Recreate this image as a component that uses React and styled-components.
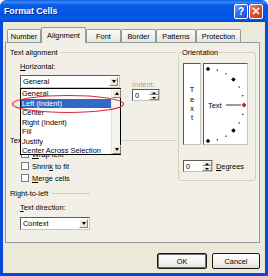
import styled, { createGlobalStyle } from 'styled-components';

const GlobalStyle = createGlobalStyle`
  body {
    margin: 0;
    background: #ffffff;
  }
  * {
    box-sizing: border-box;
  }
`;

const FONT = `"Liberation Sans", Arial, sans-serif`;

const Window = styled.div`
  width: 268px;
  height: 276px;
  display: flex;
  flex-direction: column;
  font-family: ${FONT};
  font-size: 7.4px;
  color: #000000;
`;

const TitleBar = styled.div`
  height: 22px;
  flex: none;
  display: flex;
  align-items: center;
  padding: 0 5px 0 4px;
  border-radius: 6px 6px 0 0;
  background: linear-gradient(
    #0a5ee8 0%,
    #3d8bf5 10%,
    #0a5ae6 22%,
    #0054e3 60%,
    #0259e8 88%,
    #0046c8 100%
  );
`;

const Title = styled.div`
  flex: 1;
  color: #ffffff;
  font-weight: bold;
  font-size: 8.8px;
  text-shadow: 1px 1px 0 #0a2a8a;
`;

const Caps = styled.div`
  display: flex;
  gap: 1px;
`;

const CapButton = styled.div`
  width: 14px;
  height: 15px;
  border: 1px solid #ffffff;
  border-radius: 2px;
  display: flex;
  align-items: center;
  justify-content: center;
  color: #ffffff;
  font-weight: bold;
  font-size: 10px;
  background: ${(p) =>
    p.$kind === 'close'
      ? 'linear-gradient(135deg, #f08a6a 0%, #e2502c 45%, #c4371c 100%)'
      : 'linear-gradient(135deg, #7aa6fb 0%, #2d6bf0 45%, #1c4fd6 100%)'};
`;

const Body = styled.div`
  flex: 1;
  display: flex;
  flex-direction: column;
  background: #ece9d8;
  border: 3px solid #0a4ad9;
  border-top: none;
  padding: 5px 5px 4px 2px;
`;

const TabRow = styled.div`
  height: 15px;
  display: flex;
  align-items: flex-end;
  padding-left: 2px;
  position: relative;
  z-index: 1;
`;

const Tab = styled.div`
  width: ${(p) => p.$w}px;
  height: ${(p) => (p.$active ? 16 : 13)}px;
  margin-bottom: ${(p) => (p.$active ? -1 : 0)}px;
  display: flex;
  align-items: center;
  justify-content: center;
  border: 1px solid #919b9c;
  border-bottom: none;
  border-radius: 2px 2px 0 0;
  background: ${(p) =>
    p.$active ? '#f2f0e6' : 'linear-gradient(#fbfbf8, #e8e6dc)'};
`;

const Panel = styled.div`
  height: 201px;
  position: relative;
  display: flex;
  align-items: flex-start;
  gap: 2px;
  padding: 4.5px 0 0 4px;
  border: 1px solid #919b9c;
  background: #f2f0e6;
`;

const LeftCol = styled.div`
  width: 166px;
  display: flex;
  flex-direction: column;
`;

const SectionHead = styled.div`
  width: ${(p) => p.$w || 166}px;
  height: 9px;
  margin-top: ${(p) => p.$mt || 0}px;
  display: flex;
  align-items: center;
  gap: 3px;
  line-height: 9px;
  white-space: nowrap;

  &::after {
    content: '';
    flex: 1;
    border-top: 1px solid #d0d0bf;
  }
`;

const Indented = styled.div`
  display: flex;
  flex-direction: column;
  align-items: flex-start;
  padding-left: 10px;
`;

const FieldLabel = styled.div`
  height: 9px;
  line-height: 9px;
  margin-top: ${(p) => p.$mt || 0}px;
  color: ${(p) => (p.$disabled ? '#aca899' : '#000000')};
  white-space: nowrap;
`;

const AlignRow = styled.div`
  display: flex;
  align-items: flex-start;
  margin-top: 4.5px;
`;

const Field = styled.div`
  width: ${(p) => p.$w}px;
  height: ${(p) => p.$h || 13}px;
  margin-top: ${(p) => p.$mt || 0}px;
  display: flex;
  align-items: center;
  background: #ffffff;
  border: 1px solid;
  border-color: #5a5a5a #c8c6bc #c8c6bc #5a5a5a;
  padding-left: 2px;
`;

const FieldText = styled.div`
  flex: 1;
  white-space: nowrap;
`;

const DropButton = styled.div`
  width: 9px;
  height: 9px;
  margin-right: 1px;
  display: flex;
  align-items: center;
  justify-content: center;
  background: #ece9d8;
  border: 1px solid;
  border-color: #ffffff #808080 #808080 #ffffff;

  &::after {
    content: '';
    border-left: 2.5px solid transparent;
    border-right: 2.5px solid transparent;
    border-${(p) => (p.$up ? 'bottom' : 'top')}: 3px solid #000000;
  }
`;

const SpinButtons = styled.div`
  width: 10px;
  height: 100%;
  display: flex;
  flex-direction: column;
`;

const SpinHalf = styled.div`
  flex: 1;
  display: flex;
  align-items: center;
  justify-content: center;
  background: #ece9d8;
  border: 1px solid;
  border-color: #ffffff #808080 #808080 #ffffff;

  &::after {
    content: '';
    border-left: 2px solid transparent;
    border-right: 2px solid transparent;
    border-${(p) => (p.$up ? 'bottom' : 'top')}: 2px solid #000000;
  }
`;

const IndentBlock = styled.div`
  display: flex;
  flex-direction: column;
  align-items: flex-start;
  margin-left: 12px;
  padding-top: 5px;
`;

const CheckList = styled.div`
  display: flex;
  flex-direction: column;
  margin-top: 3.5px;
  padding-left: 11px;
`;

const CheckRow = styled.div`
  height: 12px;
  display: flex;
  align-items: center;
  gap: 3px;
  white-space: nowrap;
`;

const CheckBox = styled.div`
  width: 8px;
  height: 8px;
  background: #ffffff;
  border: 1px solid #6f7f90;
`;

const OrientBox = styled.fieldset`
  width: 78px;
  height: 133.5px;
  margin: 0;
  padding: 0 4px;
  border: 1px solid #d0d0bf;
  border-radius: 3px;

  legend {
    height: 9px;
    line-height: 9px;
    padding: 0 1px;
    margin-left: -2px;
  }
`;

const DialRow = styled.div`
  display: flex;
  gap: 2px;
  margin-top: 6.5px;
  height: 82px;
`;

const WhiteBox = styled.div`
  width: ${(p) => p.$w}px;
  height: 100%;
  background: #ffffff;
  border: 1px solid;
  border-color: #5a5a5a #c8c6bc #c8c6bc #5a5a5a;
`;

const VertText = styled(WhiteBox)`
  display: flex;
  flex-direction: column;
  align-items: center;
  justify-content: center;
  line-height: 9.3px;
`;

const DegreesRow = styled.div`
  display: flex;
  align-items: center;
  gap: 3px;
  margin-top: 15px;
`;

const DropList = styled.div`
  position: absolute;
  left: 14px;
  top: 45px;
  width: 101px;
  height: 67px;
  display: flex;
  background: #ffffff;
  border: 1px solid #000000;
  z-index: 2;
`;

const ListItems = styled.div`
  flex: 1;
  display: flex;
  flex-direction: column;
`;

const ListItem = styled.div`
  height: 9.5px;
  line-height: 9.5px;
  padding-left: 1px;
  white-space: nowrap;
  background: ${(p) => (p.$selected ? '#316ac5' : 'transparent')};
  color: ${(p) => (p.$selected ? '#ffffff' : '#000000')};
`;

const ScrollBar = styled.div`
  width: 9px;
  display: flex;
  flex-direction: column;
  justify-content: space-between;
  background: #f4f3ee;
  border-left: 1px solid #e6e4da;
`;

const Mark = styled.svg`
  position: absolute;
  left: 5px;
  top: 51px;
  z-index: 3;
  overflow: visible;
`;

const ButtonRow = styled.div`
  display: flex;
  justify-content: flex-end;
  gap: 5px;
  margin-top: 10px;
`;

const Button = styled.div`
  width: ${(p) => p.$w}px;
  height: 16px;
  display: flex;
  align-items: center;
  justify-content: center;
  border: 1px solid #1a1a1a;
  border-radius: 2px;
  background: linear-gradient(#ffffff, #f2f1ec 70%, #dcd8cc);
  box-shadow: ${(p) => (p.$default ? 'inset 0 0 0 1px #6e6e6e' : 'none')};
`;

const TABS = [
  ['Number', 34],
  ['Alignment', 45],
  ['Font', 35],
  ['Border', 35],
  ['Patterns', 40],
  ['Protection', 45],
];

const HORIZONTAL = [
  'General',
  'Left (Indent)',
  'Center',
  'Right (Indent)',
  'Fill',
  'Justify',
  'Center Across Selection',
];

function Dial() {
  const cx = 4;
  const cy = 41;
  const r = 36;
  const marks = [];
  for (let a = 90; a >= -90; a -= 15) {
    if (a === 0) continue;
    const rad = (a * Math.PI) / 180;
    const x = cx + r * Math.cos(rad);
    const y = cy - r * Math.sin(rad);
    const big = a % 45 === 0;
    marks.push(
      big ? (
        <rect
          key={a}
          x={x - 1.6}
          y={y - 1.6}
          width="3.2"
          height="3.2"
          fill="#000"
          transform={`rotate(45 ${x} ${y})`}
        />
      ) : (
        <rect key={a} x={x - 0.6} y={y - 0.6} width="1.2" height="1.2" fill="#000" />
      )
    );
  }
  return (
    <svg width="43" height="80" viewBox="0 0 43 80">
      {marks}
      <text x="4" y={cy + 2.6} fontFamily={FONT} fontSize="7.4">
        Text
      </text>
      <line x1="22" y1={cy} x2="37" y2={cy} stroke="#000" strokeWidth="0.8" />
      <rect
        x={cx + r - 1.7}
        y={cy - 1.7}
        width="3.4"
        height="3.4"
        fill="#c0202a"
        transform={`rotate(45 ${cx + r} ${cy})`}
      />
    </svg>
  );
}

function Spinner({ w, value }) {
  return (
    <Field $w={w} $h={12}>
      <FieldText>{value}</FieldText>
      <SpinButtons>
        <SpinHalf $up />
        <SpinHalf />
      </SpinButtons>
    </Field>
  );
}

export default function App() {
  return (
    <Window>
      <GlobalStyle />
      <TitleBar>
        <Title>Format Cells</Title>
        <Caps>
          <CapButton $kind="help">?</CapButton>
          <CapButton $kind="close">
            <svg width="8" height="8" viewBox="0 0 8 8">
              <path d="M1 1L7 7M7 1L1 7" stroke="#fff" strokeWidth="1.7" />
            </svg>
          </CapButton>
        </Caps>
      </TitleBar>
      <Body>
        <TabRow>
          {TABS.map(([name, w]) => (
            <Tab key={name} $w={w} $active={name === 'Alignment'}>
              {name}
            </Tab>
          ))}
        </TabRow>
        <Panel>
          <LeftCol>
            <SectionHead>Text alignment</SectionHead>
            <Indented>
              <FieldLabel $mt={5}>
                <u>H</u>orizontal:
              </FieldLabel>
              <AlignRow>
                <Field $w={100}>
                  <FieldText>General</FieldText>
                  <DropButton />
                </Field>
                <IndentBlock>
                  <FieldLabel $disabled>Indent:</FieldLabel>
                  <Spinner w={28} value="0" />
                </IndentBlock>
              </AlignRow>
            </Indented>
            <SectionHead $mt={34.5}>Text control</SectionHead>
            <CheckList>
              <CheckRow>
                <CheckBox />
                <span>
                  <u>W</u>rap text
                </span>
              </CheckRow>
              <CheckRow>
                <CheckBox />
                <span>
                  Shrin<u>k</u> to fit
                </span>
              </CheckRow>
              <CheckRow>
                <CheckBox />
                <span>
                  <u>M</u>erge cells
                </span>
              </CheckRow>
            </CheckList>
            <SectionHead $w={80} $mt={4.5}>
              Right-to-left
            </SectionHead>
            <Indented>
              <FieldLabel $mt={5}>
                <u>T</u>ext direction:
              </FieldLabel>
              <Field $w={70} $mt={5.5}>
                <FieldText>Context</FieldText>
                <DropButton />
              </Field>
            </Indented>
          </LeftCol>

          <OrientBox>
            <legend>Orientation</legend>
            <DialRow>
              <VertText $w={18}>
                <span>T</span>
                <span>e</span>
                <span>x</span>
                <span>t</span>
              </VertText>
              <WhiteBox $w={45}>
                <Dial />
              </WhiteBox>
            </DialRow>
            <DegreesRow>
              <Spinner w={30} value="0" />
              <span>
                <u>D</u>egrees
              </span>
            </DegreesRow>
          </OrientBox>

          <DropList>
            <ListItems>
              {HORIZONTAL.map((item) => (
                <ListItem key={item} $selected={item === 'Left (Indent)'}>
                  {item}
                </ListItem>
              ))}
            </ListItems>
            <ScrollBar>
              <DropButton $up />
              <DropButton />
            </ScrollBar>
          </DropList>

          <Mark width="115" height="20" viewBox="0 0 115 20">
            <ellipse cx="57" cy="10" rx="55.5" ry="8.5" fill="none" stroke="#dc2a36" strokeWidth="1.2" />
          </Mark>
        </Panel>
        <ButtonRow>
          <Button $w={50} $default>
            OK
          </Button>
          <Button $w={48}>Cancel</Button>
        </ButtonRow>
      </Body>
    </Window>
  );
}
